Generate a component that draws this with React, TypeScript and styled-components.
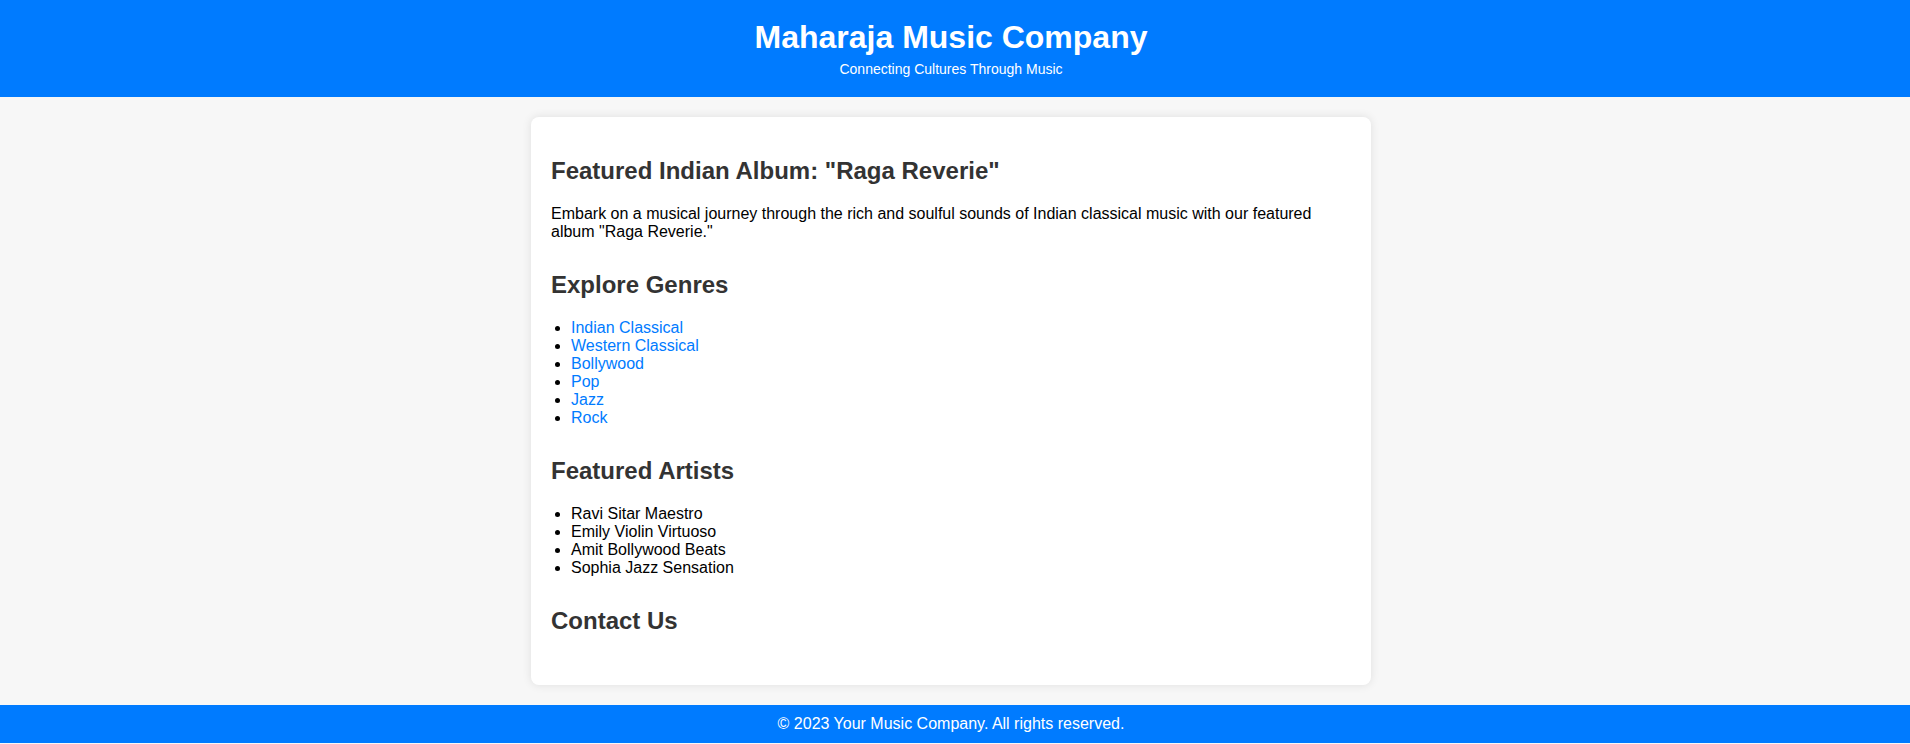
import * as React from 'react';
import styled, { createGlobalStyle } from 'styled-components';

const GlobalStyle = createGlobalStyle`
  html, body {
    margin: 0;
    padding: 0;
  }
  body {
    font-family: "Liberation Sans", Arial, sans-serif;
    background: #f7f7f7;
    color: #000;
  }
`;

/* the original centres on a slightly narrower column, so offset by 8px */
const Header = styled.header`
  background: #007bff;
  color: #fff;
  text-align: center;
  padding: 19px 8px 20px 0;
`;

const Title = styled.h1`
  margin: 0;
  font-size: 32px;
  font-weight: bold;
`;

const Tagline = styled.p`
  margin: 5px 0 0;
  font-size: 14px;
`;

const Content = styled.div`
  padding-right: 8px;
  overflow: hidden;
`;

const Main = styled.main`
  width: 800px;
  margin: 20px auto;
  padding: 20px;
  background: #fff;
  border-radius: 8px;
  box-shadow: 0 0 10px rgba(0, 0, 0, 0.1);
`;

const Section = styled.section`
  margin-bottom: 30px;
`;

const Heading = styled.h2`
  color: #333;
  font-size: 24px;
  margin: 0.83em 0;
`;

const Text = styled.p`
  margin: 16px 0;
  font-size: 16px;
`;

const List = styled.ul`
  margin: 16px 0;
  padding-left: 20px;
  font-size: 16px;
`;

const Item = styled.li``;

const Link = styled.a`
  color: #007bff;
  text-decoration: none;
`;

const Footer = styled.footer`
  background: #007bff;
  color: #fff;
  text-align: center;
  padding: 10px 8px 10px 0;
  font-size: 16px;
`;

const genres = ['Indian Classical', 'Western Classical', 'Bollywood', 'Pop', 'Jazz', 'Rock'];
const artists = ['Ravi Sitar Maestro', 'Emily Violin Virtuoso', 'Amit Bollywood Beats', 'Sophia Jazz Sensation'];

export default function App() {
  return (
    <>
      <GlobalStyle />
      <Header>
        <Title>Maharaja Music Company</Title>
        <Tagline>Connecting Cultures Through Music</Tagline>
      </Header>
      <Content>
        <Main>
          <Section>
            <Heading>Featured Indian Album: "Raga Reverie"</Heading>
            <Text>
              Embark on a musical journey through the rich and soulful sounds of Indian classical music with
              our featured album "Raga Reverie."
            </Text>
          </Section>
          <Section>
            <Heading>Explore Genres</Heading>
            <List>
              {genres.map((g) => (
                <Item key={g}>
                  <Link href="#">{g}</Link>
                </Item>
              ))}
            </List>
          </Section>
          <Section>
            <Heading>Featured Artists</Heading>
            <List>
              {artists.map((a) => (
                <Item key={a}>{a}</Item>
              ))}
            </List>
          </Section>
          <Section>
            <Heading>Contact Us</Heading>
          </Section>
        </Main>
      </Content>
      <Footer>© 2023 Your Music Company. All rights reserved.</Footer>
    </>
  );
}
